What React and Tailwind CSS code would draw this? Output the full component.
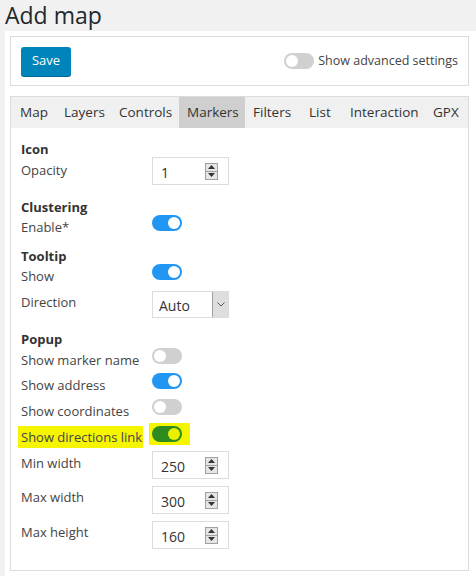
import React from "react";

const font = { fontFamily: '"Open Sans", "Noto Sans", sans-serif' };

function Toggle({ on = false, color = "blue" }) {
  const track = !on ? "bg-[#d0d0d0]" : color === "green" ? "bg-[#2e8b1f]" : "bg-[#2196f3]";
  const knob = color === "green" ? "bg-[#e8f000]" : "bg-white";
  return (
    <span className={`flex h-[16px] w-[30px] items-center rounded-full px-[2px] ${track} ${on ? "justify-end" : "justify-start"}`}>
      <span className={`h-[12px] w-[12px] rounded-full ${on ? knob : "bg-white"}`} />
    </span>
  );
}

function Spinner() {
  return (
    <span className="flex h-[17px] w-[13px] flex-col border border-[#a0a0a0] bg-[#e6e6e6]">
      <span className="flex flex-1 items-center justify-center border-b border-[#a0a0a0]">
        <svg width="7" height="4" viewBox="0 0 7 4"><path d="M3.5 0 L7 4 L0 4 Z" fill="#333" /></svg>
      </span>
      <span className="flex flex-1 items-center justify-center">
        <svg width="7" height="4" viewBox="0 0 7 4"><path d="M0 0 L7 0 L3.5 4 Z" fill="#333" /></svg>
      </span>
    </span>
  );
}

function NumberInput({ value, offset }) {
  return (
    <div className={`flex h-[28px] w-[77px] items-center justify-between border border-[#dcdcdc] pl-[8px] pr-[10px] text-[14px] text-[#333] ${offset}`}>
      <span className="pt-[3px]">{value}</span>
      <Spinner />
    </div>
  );
}

function Heading({ children, h = "h-[20px]" }) {
  return <div className={`${h} font-bold leading-[20px] text-[#333]`}>{children}</div>;
}

function Row({ label, children, h, highlight = false }) {
  return (
    <div className={`flex items-start ${h}`}>
      <div className="w-[131px] leading-[20px]">
        <span className={highlight ? "-ml-[3px] bg-[#f5f500] py-[2px] pl-[3px] pr-[1px]" : ""}>{label}</span>
      </div>
      {children}
    </div>
  );
}

const tabs = [
  { name: "Map", w: "w-[44px]" },
  { name: "Layers", w: "w-[55px]" },
  { name: "Controls", w: "w-[68px]" },
  { name: "Markers", w: "w-[66px]", active: true },
  { name: "Filters", w: "w-[56px]" },
  { name: "List", w: "w-[41px]" },
  { name: "Interaction", w: "w-[83px]" },
  { name: "GPX", w: "w-[42px]" },
];

export default function App() {
  return (
    <div className="h-[576px] w-[476px] overflow-hidden bg-[#f1f1f1] text-[13px] text-[#444]" style={font}>
      <h1 className="ml-[5px] h-[31px] text-[23px] leading-[30px] text-[#23282d]">Add map</h1>
      <div className="ml-[5px] h-[545px] bg-white pl-[5px] pt-[5px] pr-[7px]">
        <div className="flex h-[50px] items-center justify-between border border-[#dcdcdc] pl-[10px] pr-[10px]">
          <button className="h-[29px] w-[50px] rounded-[3px] bg-[#0085ba] text-[13px] text-white shadow-[0_1px_0_#006799]">Save</button>
          <div className="flex items-center gap-[4px]">
            <Toggle />
            <span className="text-[12.5px] text-[#444]">Show advanced settings</span>
          </div>
        </div>
        <div className="mt-[10px] h-[475px] border border-[#dcdcdc]">
          <div className="flex h-[31px] items-stretch bg-[#f0f0f0] pl-[1px] text-[13.5px] text-[#333]">
            {tabs.map((t) => (
              <span key={t.name} className={`flex shrink-0 items-center whitespace-nowrap pl-[8px] ${t.w} ${t.active ? "bg-[#cfcfcf]" : ""}`}>{t.name}</span>
            ))}
          </div>
          <div className="px-[10px] pt-[11px] text-[13px] text-[#444]">
            <Heading>Icon</Heading>
            <Row label="Opacity" h="h-[38px] pt-[1px]">
              <NumberInput value="1" offset="-mt-[3px]" />
            </Row>
            <Heading>Clustering</Heading>
            <Row label="Enable*" h="h-[29px]">
              <span className="-mt-[2px]"><Toggle on /></span>
            </Row>
            <Heading>Tooltip</Heading>
            <Row label="Show" h="h-[26px]">
              <span className="-mt-[2px]"><Toggle on /></span>
            </Row>
            <Row label="Direction" h="h-[37px]">
              <div className="-mt-[1px] flex h-[27px] w-[77px] items-center justify-between border border-[#dcdcdc] text-[14px] text-[#333]">
                <span className="pl-[6px] pt-[2px]">Auto</span>
                <span className="flex h-[25px] w-[16px] items-center justify-center border-l border-[#a0a0a0] bg-[#dedede]">
                  <svg width="8" height="5" viewBox="0 0 8 5"><path d="M0.5 0.5 L4 4 L7.5 0.5" fill="none" stroke="#555" strokeWidth="1" /></svg>
                </span>
              </div>
            </Row>
            <Heading h="h-[21px]">Popup</Heading>
            <Row label="Show marker name" h="h-[25px]">
              <span className="-mt-[2px]"><Toggle /></span>
            </Row>
            <Row label="Show address" h="h-[26px]">
              <span className="-mt-[2px]"><Toggle on /></span>
            </Row>
            <Row label="Show coordinates" h="h-[26px]">
              <span className="-mt-[2px]"><Toggle /></span>
            </Row>
            <Row label="Show directions link" h="h-[26px]" highlight>
              <span className="-mt-[4px] -ml-[3px] flex h-[22px] items-center bg-[#f5f500] pl-[3px] pr-[8px]">
                <Toggle on color="green" />
              </span>
            </Row>
            <Row label="Min width" h="h-[34px]">
              <NumberInput value="250" offset="-mt-[2px]" />
            </Row>
            <Row label="Max width" h="h-[35px]">
              <NumberInput value="300" offset="-mt-[1px]" />
            </Row>
            <Row label="Max height" h="h-[35px]">
              <NumberInput value="160" offset="-mt-[1px]" />
            </Row>
          </div>
        </div>
      </div>
    </div>
  );
}
